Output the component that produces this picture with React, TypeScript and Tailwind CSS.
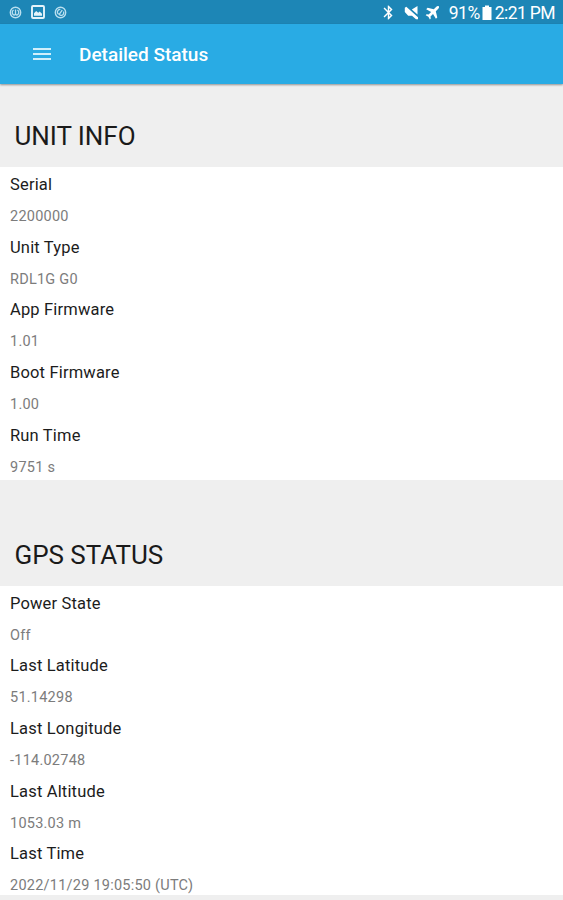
import { MdBluetooth } from "react-icons/md";

type Item = { label: string; value: string };

const unitInfo: Item[] = [
  { label: "Serial", value: "2200000" },
  { label: "Unit Type", value: "RDL1G G0" },
  { label: "App Firmware", value: "1.01" },
  { label: "Boot Firmware", value: "1.00" },
  { label: "Run Time", value: "9751 s" },
];

const gpsStatus: Item[] = [
  { label: "Power State", value: "Off" },
  { label: "Last Latitude", value: "51.14298" },
  { label: "Last Longitude", value: "-114.02748" },
  { label: "Last Altitude", value: "1053.03 m" },
  { label: "Last Time", value: "2022/11/29 19:05:50 (UTC)" },
];

function PowerBadge({ slanted = false }: { slanted?: boolean }) {
  return (
    <svg className="size-[13px]" viewBox="0 0 13 13" fill="none" stroke="#b9dfef">
      <circle cx="6.5" cy="6.5" r="5.2" strokeWidth="1.4" />
      <g transform={slanted ? "rotate(35 6.5 6.5)" : undefined}>
        <path
          d="M4.600 4a2.800 2.800 0 0 0 0 4.800c1 .5 1.900-.2 1.900-1.300V3.500v4c0 1.100.9 1.800 1.900 1.300a2.800 2.800 0 0 0 0-4.800"
          strokeWidth="1.3"
        />
      </g>
    </svg>
  );
}

function StatusBar() {
  return (
    <div className="flex h-6 shrink-0 items-center bg-[#1d86b6] pr-[8px] pl-[9px] text-white">
      <PowerBadge />
      <svg className="ml-[9px] size-[14px]" viewBox="0 0 14 14" fill="none">
        <rect x="1" y="1" width="12" height="12" rx="1" stroke="#e4f3fa" strokeWidth="1.9" />
        <path d="M3 10.700V8.200l2.200-2.200 2 1.800 1.500-1.200 2.300 2.200v1.900z" fill="#e4f3fa" />
      </svg>
      <span className="ml-[9px] flex">
        <PowerBadge slanted />
      </span>
      <div className="ml-auto flex items-center">
        <MdBluetooth className="size-[17px]" />
        <svg className="ml-[7px] size-[15px]" viewBox="0 0 15 15" fill="#fff">
          <path d="M.8 2.800L2.300 1.800 14 12.300v1.900h-2L8 10.700H4.200L.8 7z" />
          <path d="M7.800 4.600L13.500 1v8.500z" />
        </svg>
        <svg className="ml-[6px] size-[15px]" viewBox="0 0 15 15" fill="#fff">
          <path d="M13.700 1.300c.7.700.3 1.700-.4 2.400L10.800 6.200l1.500 6.200-1.400 1.400-2.900-4.800-2.500 2.500.3 2-.9.900-1.500-2.700L.7 10.200l.9-.9 2 .3L6.100 7.100 1.200 4.200l1.400-1.400 6.200 1.500 2.500-2.500c.7-.7 1.800-1.100 2.400-.5z" />
        </svg>
        <span className="ml-[9px] pt-px text-[17.500px] leading-6 tracking-[-0.5px]">91%</span>
        <svg className="ml-[2px] h-[15px] w-[10px]" viewBox="0 0 10 15" fill="#fff">
          <path d="M3 .5h4V2h2.500v13H.5V2H3z" />
        </svg>
        <span className="ml-[3px] pt-px text-[17.500px] leading-6 tracking-[-0.6px]">2:21 PM</span>
      </div>
    </div>
  );
}

function AppBar() {
  return (
    <header className="z-10 flex h-[59.500px] shrink-0 items-center bg-[#29abe4] pt-px pl-[33px] text-white shadow-[0_1px_2px_rgba(0,0,0,0.4)]">
      <button className="flex w-[18px] flex-col gap-[3px]" aria-label="Menu">
        <span className="h-[2px] bg-[#d0effb]" />
        <span className="h-[2px] bg-[#d0effb]" />
        <span className="h-[2px] bg-[#d0effb]" />
      </button>
      <h1 className="ml-[28px] pt-px text-[19px] font-medium">Detailed Status</h1>
    </header>
  );
}

function Section({ title, items }: { title: string; items: Item[] }) {
  return (
    <section>
      <h2 className="pb-[11.700px] pl-[14.500px] text-[26px] leading-[38px] tracking-[-0.05px] text-[#1a1a1a]">{title}</h2>
      <dl className="bg-white pl-[10px]">
        {items.map((item) => (
          <div key={item.label} className="h-[62.700px]">
            <dt className="pt-[2.100px] text-[16.500px] leading-[31px] tracking-[0.170px] text-[#1c1c1c]">{item.label}</dt>
            <dd className="pt-[2px] text-[14.500px] leading-[29px] tracking-[0.240px] text-[#7c7c7c]">{item.value}</dd>
          </div>
        ))}
      </dl>
    </section>
  );
}

export default function App() {
  return (
    <div className="flex h-[900px] w-[563px] flex-col overflow-hidden bg-[#efefef] font-[Roboto,sans-serif]">
      <StatusBar />
      <AppBar />
      <main className="flex min-h-0 flex-1 flex-col gap-[55.500px] overflow-hidden pt-[33.800px]">
        <Section title="UNIT INFO" items={unitInfo} />
        <Section title="GPS STATUS" items={gpsStatus} />
      </main>
      <footer className="h-[5px] shrink-0 bg-[#efefef]" />
    </div>
  );
}
